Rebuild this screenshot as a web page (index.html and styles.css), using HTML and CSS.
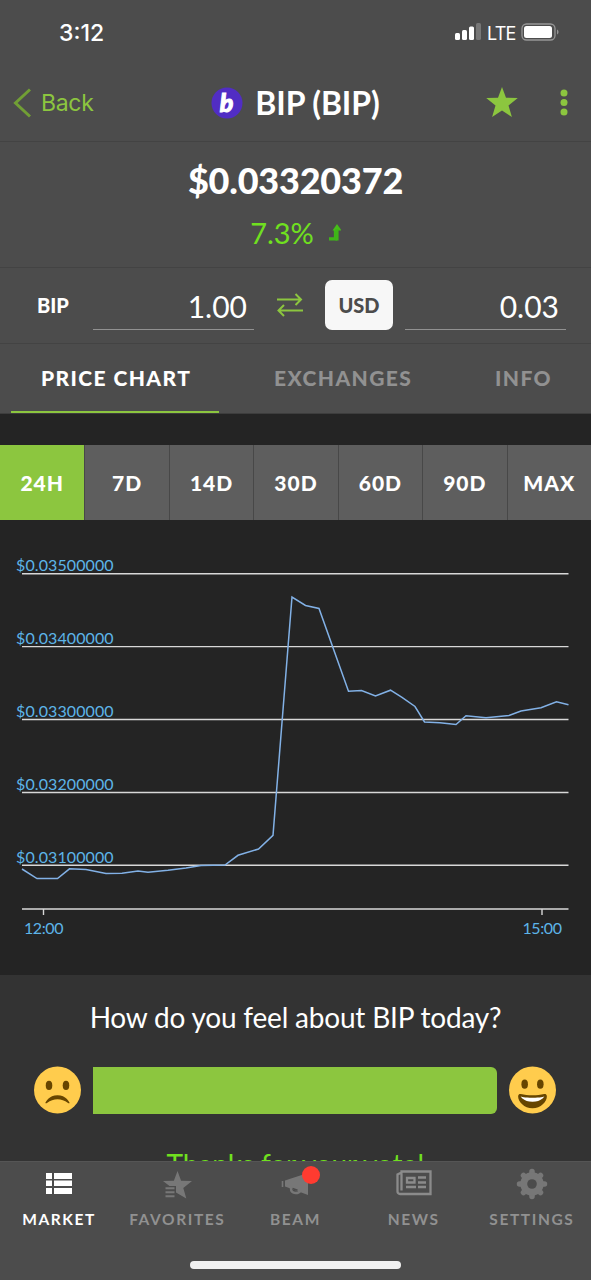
FILE: index.html
```html
<!DOCTYPE html>
<html lang="en">

<head>
  <meta charset="UTF-8">
  <meta name="viewport" content="width=device-width, initial-scale=1.0">
  <title>BIP (BIP)</title>
  <link rel="stylesheet" href="styles.css">
</head>

<body>
  <div class="app">
    <div class="status-bar">
      <span class="time">3:12</span>
      <div class="status-icons">
        <svg width="28" height="18" viewBox="0 0 28 18">
          <rect x="1" y="10" width="5" height="7" rx="1.5" fill="#fff"/>
          <rect x="8" y="7" width="5" height="10" rx="1.5" fill="#fff"/>
          <rect x="15" y="3.500" width="5" height="13.500" rx="1.5" fill="#fff"/>
          <rect x="22" y="0" width="5" height="17" rx="1.5" fill="#777"/>
        </svg>
        <span class="network">LTE</span>
        <svg width="39" height="18" viewBox="0 0 39 18">
          <rect x="1" y="1" width="33" height="16" rx="4.500" fill="none" stroke="#969696" stroke-width="1.3"/>
          <rect x="3" y="3" width="28" height="12" rx="2.500" fill="#fff"/>
          <path d="M36 6.500c2 .8 2 4.200 0 5z" fill="#969696"/>
        </svg>
      </div>
    </div>

    <header class="header">
      <a class="back">
        <svg width="18" height="30" viewBox="0 0 18 30"><path d="M17 1.500L2.500 15 17 28.500" fill="none" stroke="#719f35" stroke-width="3"/></svg>
        Back
      </a>
      <div class="coin">
        <svg width="32" height="32" viewBox="0 0 32 32">
          <circle cx="16" cy="16" r="15.500" fill="#512dc4"/>
          <text x="15.500" y="24.500" text-anchor="middle" class="coin-letter">b</text>
        </svg>
        <h1>BIP (BIP)</h1>
      </div>
      <div class="actions">
        <svg width="32" height="31" viewBox="0 0 32 31"><path d="M16 0l4 10.700 11.800.4-9.300 7.400 3.400 11.500L16 23.500 6.100 30l3.400-11.500L.2 11.100l11.800-.4z" fill="#8cc63f"/></svg>
        <svg width="8" height="28" viewBox="0 0 8 28" fill="#8cc63f"><circle cx="4" cy="4" r="3.500"/><circle cx="4" cy="13.500" r="3.500"/><circle cx="4" cy="23" r="3.500"/></svg>
      </div>
    </header>

    <section class="price">
      <div class="price-value">$0.03320372</div>
      <div class="price-change">
        7.3%
        <svg width="12" height="18" viewBox="0 0 12 18"><path d="M0 14.800h6.500V5" fill="none" stroke="#3fb618" stroke-width="3.300"/><path d="M8 0l4.500 6.500h-9z" fill="#45bd18"/><path d="M6.400 5h3.200v11.500H6.400z" fill="#3fb618"/></svg>
      </div>
    </section>

    <section class="converter">
      <span class="from">BIP</span>
      <div class="amount">1.00</div>
      <svg class="swap" width="26" height="24" viewBox="0 0 26 24" fill="none" stroke="#8cc63f" stroke-width="2"><path d="M0 6.500h24M18.500 1l5.500 5.500-5.500 5.500M26 17.500H2M7 12l-5.500 5.500L7 23"/></svg>
      <button class="currency">USD</button>
      <div class="amount">0.03</div>
    </section>

    <nav class="tabs">
      <a class="tab active">PRICE CHART</a>
      <a class="tab">EXCHANGES</a>
      <a class="tab">INFO</a>
    </nav>

    <div class="ranges">
      <a class="range active">24H</a>
      <a class="range">7D</a>
      <a class="range">14D</a>
      <a class="range">30D</a>
      <a class="range">60D</a>
      <a class="range">90D</a>
      <a class="range">MAX</a>
    </div>

    <section class="chart">
      <svg width="591" height="455" viewBox="0 520 591 455">
        <g class="grid">
          <path d="M22 573.700H568.500M22 646.600H568.500M22 719.500H568.500M22 792.500H568.500M22 865.300H568.500"/>
          <path d="M22 909H568.500M43.500 909V915M542 909V915"/>
        </g>
        <polyline class="line" points="22,869 37,878.600 57.500,878.500 69.500,868.800 86,869.500 106,873.500 122,873.200 138,871 148,872.300 168,870.300 186,868 201,865.500 225,865 238,855.300 258.500,849 273,835.300 292,597 305.500,605.500 319,608.500 348.500,691.300 361.500,690.500 375.500,696 390.500,690.200 402,697.300 415,706.500 424.500,722 440,722.700 456,724.500 466,715.800 486,717.800 509,715.500 521,711 541,707.800 556.500,701.800 568.500,704.700"/>
        <g class="axis">
          <text x="16" y="571">$0.03500000</text>
          <text x="16" y="644">$0.03400000</text>
          <text x="16" y="717">$0.03300000</text>
          <text x="16" y="790">$0.03200000</text>
          <text x="16" y="863">$0.03100000</text>
          <text class="hour" x="43.500" y="933.500" text-anchor="middle">12:00</text>
          <text class="hour" x="542" y="933.500" text-anchor="middle">15:00</text>
        </g>
      </svg>
    </section>

    <section class="vote">
      <h2>How do you feel about BIP today?</h2>
      <div class="vote-row">
        <svg width="47" height="48" viewBox="0 0 36 36">
          <circle cx="18" cy="18" r="18" fill="#ffcc4d"/>
          <ellipse cx="11.500" cy="14.500" rx="2.500" ry="3.500" fill="#664500"/>
          <ellipse cx="24.500" cy="14.500" rx="2.500" ry="3.500" fill="#664500"/>
          <path d="M8.700 27.900C8.800 27.300 11.500 22 18 22s9.200 5.300 9.300 5.900c-.3.400-1 .2-1.500-.2-2.200-1.700-5-2.700-7.800-2.700s-5.600 1-7.800 2.700c-.5.400-1.200.6-1.500.2z" fill="#664500"/>
        </svg>
        <div class="vote-bar"></div>
        <svg width="47" height="48" viewBox="0 0 36 36">
          <circle cx="18" cy="18" r="18" fill="#ffcc4d"/>
          <ellipse cx="12" cy="13.500" rx="2.500" ry="3.500" fill="#664500"/>
          <ellipse cx="24" cy="13.500" rx="2.500" ry="3.500" fill="#664500"/>
          <path d="M18 22c-3.600 0-6-.4-9-1-.7-.1-2 0-2 2 0 4 4.600 9 11 9 6.400 0 11-5 11-9 0-2-1.300-2.100-2-2-3 .6-5.400 1-9 1z" fill="#664500"/>
          <path d="M9 23s3 1 9 1 9-1 9-1-2 4-9 4-9-4-9-4z" fill="#fff"/>
        </svg>
      </div>
      <p class="thanks">Thanks for your vote!</p>
    </section>

    <footer class="tab-bar">
      <div class="menu">
        <a class="menu-item active">
          <svg width="26" height="32" viewBox="0 -5 26 32" fill="currentColor"><path d="M0 0h6v6H0zM8 0h18v6H8zM0 7.500h6v5.500H0zM8 7.500h18v5.500H8zM0 15h6v6H0zM8 15h18v6H8z"/></svg>
          MARKET
        </a>
        <a class="menu-item">
          <svg width="29" height="32" viewBox="0 -3 29 32" fill="#777"><path d="M14.500 0l3.600 9.800 10.900.3-8.700 6.800 3 10.500L13 21.500V15H6.500L0 10.100l10.900-.3zM2.500 16.300h9v2h-9zM2.500 20.300h9v2h-9zM2.500 24.300h9v2h-9z"/></svg>
          FAVORITES
        </a>
        <a class="menu-item">
          <svg width="28" height="32" viewBox="0 0 28 32"><path d="M4 12.500l6-2 17-5.500v22l-8-3-15-5.500z" fill="#777"/><path d="M1.500 13v6" stroke="#777" stroke-width="1.600"/><path d="M10 20c-.3 3 1.500 5 4.500 5 2.500 0 4-.5 4.500-2" fill="none" stroke="#777" stroke-width="2.400"/><path d="M11.500 20.500l5 1.700" stroke="#4c4c4c" stroke-width="1.500"/></svg>
          <span class="badge"></span>
          BEAM
        </a>
        <a class="menu-item">
          <svg width="36" height="32" viewBox="0 -2 36 32" fill="none" stroke="#8b8b8b" stroke-width="2.300"><path d="M5.500 1.500h29v22.500H4a2.500 2.500 0 0 1-2.500-2.500V4.500l4-2zM5.500 2v18.500"/><path d="M11 8h7.500v4.500H11zM22 7.500h8M22 12.500h8M10 17h10M22 17h8"/></svg>
          NEWS
        </a>
        <a class="menu-item">
          <svg width="32" height="32" viewBox="0 0 32 32"><g stroke="#777" stroke-width="5.500" stroke-linecap="round"><path d="M16 3.500v25M3.500 16h25M7.500 7.500l17 17M24.500 7.500l-17 17"/></g><circle cx="16" cy="16" r="11.700" fill="#777"/><circle cx="16" cy="16" r="4.800" fill="#4c4c4c"/></svg>
          SETTINGS
        </a>
      </div>
      <div class="home-indicator"></div>
    </footer>
  </div>
</body>

</html>
```
FILE: styles.css
```css
* {
  box-sizing: border-box;
}

body {
  margin: 0;
  background: #242424;
  color: #fff;
  font-family: Lato, sans-serif;
}

h1, h2, p {
  margin: 0;
}

.app {
  display: flex;
  flex-direction: column;
  width: 591px;
  height: 1280px;
  overflow: hidden;
}

.status-bar {
  display: flex;
  justify-content: space-between;
  height: 64px;
  padding: 0 31px 0 59px;
  background: #4c4c4c;
  font-family: Inter, sans-serif;
}

.time {
  font-size: 23px;
  font-weight: 500;
  line-height: 66px;
}

.status-icons {
  display: flex;
  align-items: center;
  gap: 5px;
}

.network {
  width: 29px;
  padding-top: 2px;
  font-size: 18px;
  letter-spacing: -0.8px;
}

.header {
  display: grid;
  grid-template-columns: 1fr auto 1fr;
  align-items: center;
  height: 77px;
  padding: 0 23px 0 13px;
  background: #4c4c4c;
}

.back {
  display: flex;
  align-items: center;
  gap: 10px;
  color: #8cc63f;
  font-family: Inter, sans-serif;
  font-size: 23px;
  letter-spacing: -0.3px;
}

.coin {
  display: flex;
  align-items: center;
  gap: 12px;
  padding-left: 10px;
}

.coin-letter {
  fill: #fff;
  stroke: #fff;
  font: italic 900 25px Lato, sans-serif;
}

h1 {
  font-size: 32px;
  line-height: 40px;
  letter-spacing: -0.1px;
}

.actions {
  display: flex;
  align-items: center;
  justify-content: flex-end;
  gap: 42px;
}

.price {
  height: 126px;
  padding-top: 16px;
  border-top: 1px solid #434343;
  background: #4c4c4c;
  text-align: center;
}

.price-value {
  font-size: 36px;
  font-weight: 900;
  line-height: 44px;
  letter-spacing: -0.2px;
}

.price-change {
  display: flex;
  align-items: center;
  justify-content: center;
  gap: 15px;
  margin-top: 13px;
  color: #70e01f;
  font-size: 29px;
  line-height: 36px;
}

.converter {
  display: flex;
  align-items: center;
  height: 76px;
  padding: 0 25px 2px 37px;
  border-top: 1px solid #434343;
  background: #4c4c4c;
}

.from {
  width: 56px;
  font-size: 20px;
  font-weight: 900;
}

.amount {
  width: 161px;
  height: 50px;
  padding-right: 7px;
  border-bottom: 1px solid #919191;
  font-size: 30px;
  line-height: 52px;
  text-align: right;
}

.swap {
  margin: 0 22px 0 23px;
}

.currency {
  width: 68px;
  height: 50px;
  margin-right: 12px;
  padding: 0;
  border: 0;
  border-radius: 7px;
  background: #f7f7f7;
  color: #4c4c4c;
  font: 900 20px Lato, sans-serif;
}

.tabs {
  display: flex;
  justify-content: space-between;
  height: 71px;
  padding: 0 11px;
  border-top: 1px solid #434343;
  border-bottom: 1px solid #3d3d3d;
  background: #4c4c4c;
}

.tab {
  padding: 0 28px 0 30px;
  color: #919191;
  font-size: 21px;
  font-weight: 900;
  line-height: 67px;
  letter-spacing: 1.4px;
}

.tab.active {
  border-bottom: 2px solid #8cc63f;
  color: #fff;
}

.ranges {
  display: grid;
  grid-template-columns: repeat(7, 1fr);
  height: 75px;
  margin-top: 31px;
}

.range {
  border-left: 1px solid #484848;
  background: #5e5e5e;
  font-size: 21px;
  font-weight: 900;
  line-height: 75px;
  letter-spacing: 1px;
  text-align: center;
}

.range.active {
  border-left: 0;
  background: #8cc63f;
}

.chart {
  height: 455px;
}

.chart svg {
  display: block;
}

.grid {
  fill: none;
  stroke: #d8d8d8;
  stroke-width: 1.4;
}

.line {
  fill: none;
  stroke: #82b1e6;
  stroke-width: 1.5;
}

.axis {
  fill: #5db4e8;
  font-size: 16px;
  letter-spacing: 0.1px;
}

.hour {
  letter-spacing: -0.4px;
}

.vote {
  height: 186px;
  padding-top: 22px;
  overflow: hidden;
  background: #333;
  text-align: center;
}

h2 {
  font-size: 28px;
  font-weight: 400;
  line-height: 40px;
  letter-spacing: -0.2px;
}

.vote-row {
  display: flex;
  align-items: center;
  gap: 12px;
  margin-top: 29px;
  padding: 0 35px 0 34px;
}

.vote-bar {
  flex: 1;
  height: 47px;
  border-radius: 0 6px 6px 0;
  background: #8cc63f;
}

.thanks {
  margin-top: 30px;
  color: #70e01f;
  font-size: 28px;
  line-height: 40px;
  letter-spacing: -0.1px;
}

.tab-bar {
  height: 119px;
  border-top: 1px solid #555;
  background: #4c4c4c;
}

.menu {
  display: grid;
  grid-template-columns: repeat(5, 1fr);
}

.menu-item {
  position: relative;
  display: flex;
  flex-direction: column;
  align-items: center;
  color: #919191;
  font-size: 15.5px;
  font-weight: 700;
  line-height: 20px;
  letter-spacing: 1.6px;
}

.menu-item svg {
  height: 32px;
  margin: 6px 0 9px;
}

.menu-item.active {
  color: #fff;
}

.badge {
  position: absolute;
  top: 4px;
  left: 66px;
  width: 18px;
  height: 18px;
  border-radius: 50%;
  background: #ff3b30;
}

.home-indicator {
  width: 211px;
  height: 8px;
  margin: 32px auto 0;
  border-radius: 4px;
  background: #f0f0f0;
}
```
